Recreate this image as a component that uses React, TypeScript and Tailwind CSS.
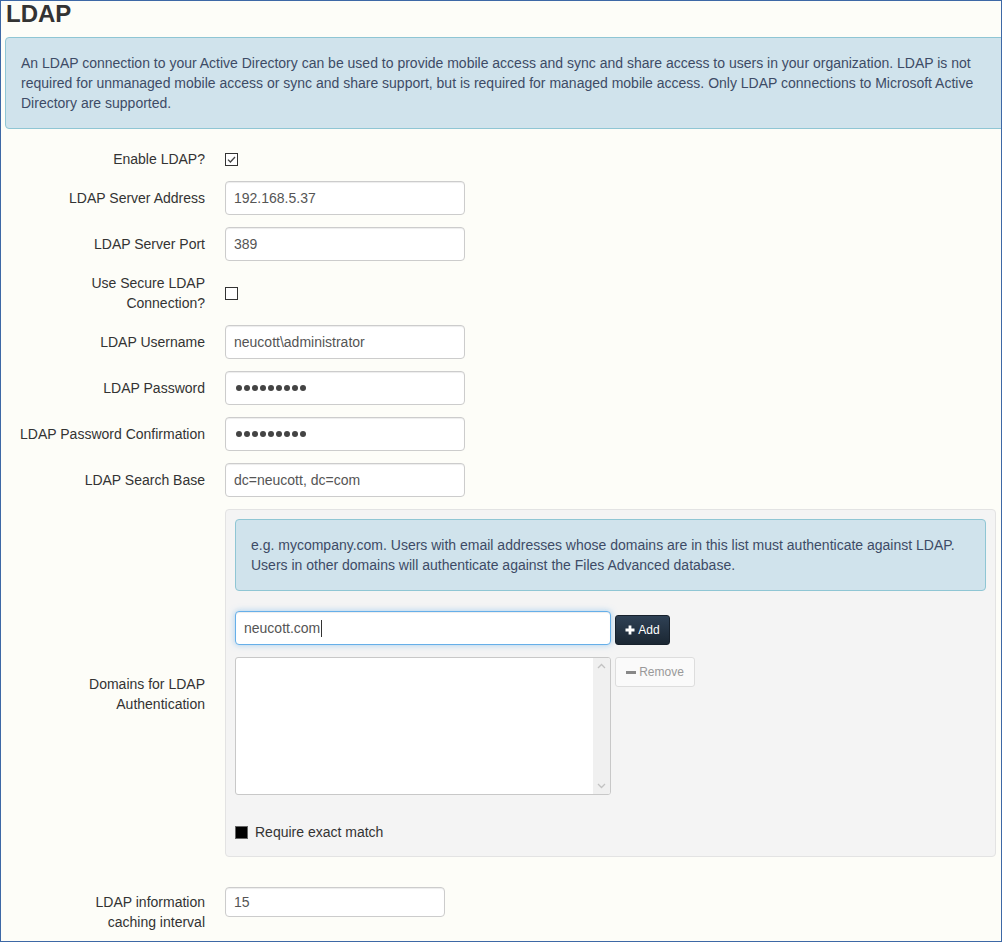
import React from "react";

const fieldSkin =
  "rounded-[4px] border border-[#ccc] bg-white px-[8px] text-[14px] text-[#555] shadow-[inset_0_1px_1px_rgba(0,0,0,0.075)]";

function Label({ children, className = "" }: { children: React.ReactNode; className?: string }) {
  return (
    <div className={`w-[204px] shrink-0 text-right leading-[20px] text-[#333] ${className}`}>{children}</div>
  );
}

function TextField({ value }: { value: string }) {
  return <div className={`${fieldSkin} h-[34px] w-[240px] leading-[32px]`}>{value}</div>;
}

function PasswordField() {
  return (
    <div className={`${fieldSkin} flex h-[34px] w-[240px] items-center gap-[2px] pl-[10px]`} aria-label="password">
      {Array.from({ length: 9 }).map((_, i) => (
        <span key={i} className="block h-[6px] w-[6px] rounded-full bg-[#444]" />
      ))}
    </div>
  );
}

function CheckBox({ checked }: { checked: boolean }) {
  return (
    <span className="flex h-[13px] w-[13px] items-center justify-center border border-[#333] bg-white">
      {checked && (
        <svg width="11" height="11" viewBox="0 0 11 11" fill="none">
          <path d="M2 5.6 L4.4 8 L9 3" stroke="#444" strokeWidth="1.3" />
        </svg>
      )}
    </span>
  );
}

export default function App() {
  return (
    <div className="h-[942px] w-[1002px] overflow-hidden border border-[#3d68a6] bg-[#fdfdf8] font-['Liberation_Sans',Arial,sans-serif] text-[14px] text-[#333]">
      <h1 className="pl-[5px] text-[24px] font-bold leading-[26px] text-[#333]">LDAP</h1>

      <div className="ml-[4px] mr-[-8px] mt-[10px] rounded-[4px] border border-[#8fc6d4] bg-[#d0e3ec] px-[15px] py-[15px] pr-[23px] leading-[20px] text-[#3d4b66]">
        An LDAP connection to your Active Directory can be used to provide mobile access and sync and share
        access to users in your organization. LDAP is not required for unmanaged mobile access or sync and share
        support, but is required for managed mobile access. Only LDAP connections to Microsoft Active Directory
        are supported.
      </div>

      <div className="mt-[20px] flex flex-col gap-[12px]">
        <div className="flex items-center">
          <Label>Enable LDAP?</Label>
          <div className="ml-[20px]">
            <CheckBox checked />
          </div>
        </div>

        <div className="flex items-center">
          <Label>LDAP Server Address</Label>
          <div className="ml-[20px]">
            <TextField value="192.168.5.37" />
          </div>
        </div>

        <div className="flex items-center">
          <Label>LDAP Server Port</Label>
          <div className="ml-[20px]">
            <TextField value="389" />
          </div>
        </div>

        <div className="flex items-center">
          <Label>
            Use Secure LDAP
            <br />
            Connection?
          </Label>
          <div className="ml-[20px]">
            <CheckBox checked={false} />
          </div>
        </div>

        <div className="flex items-center">
          <Label>LDAP Username</Label>
          <div className="ml-[20px]">
            <TextField value="neucott\administrator" />
          </div>
        </div>

        <div className="flex items-center">
          <Label>LDAP Password</Label>
          <div className="ml-[20px]">
            <PasswordField />
          </div>
        </div>

        <div className="flex items-center">
          <Label>LDAP Password Confirmation</Label>
          <div className="ml-[20px]">
            <PasswordField />
          </div>
        </div>

        <div className="flex items-center">
          <Label>LDAP Search Base</Label>
          <div className="ml-[20px]">
            <TextField value="dc=neucott, dc=com" />
          </div>
        </div>

        {/* Domains panel */}
        <div className="flex items-start">
          <Label className="mt-[165px]">
            Domains for LDAP
            <br />
            Authentication
          </Label>
          <div className="ml-[20px] w-[771px] rounded-[4px] border border-[#e3e3e3] bg-[#f4f4f4] px-[9px] pb-[14px] pt-[9px]">
            <div className="rounded-[4px] border border-[#8fc6d4] bg-[#d0e3ec] px-[15px] py-[15px] leading-[20px] text-[#3d4b66]">
              e.g. mycompany.com. Users with email addresses whose domains are in this list must authenticate against
              LDAP. Users in other domains will authenticate against the Files Advanced database.
            </div>

            <div className="mt-[20px] flex items-end gap-[4px]">
              <div className="flex h-[34px] w-[376px] items-center rounded-[4px] border border-[#66afe9] bg-white px-[8px] text-[14px] text-[#555] shadow-[inset_0_1px_1px_rgba(0,0,0,0.075),0_0_6px_rgba(102,175,233,0.55)]">
                <span>neucott.com</span>
                <span className="ml-[1px] h-[17px] w-[1px] bg-[#333]" />
              </div>
              <button className="flex h-[30px] w-[55px] items-center justify-center gap-[3px] rounded-[3px] border border-[#17212c] bg-gradient-to-b from-[#2f4155] to-[#1b2733] text-[12px] text-white">
                <svg width="10" height="10" viewBox="0 0 10 10">
                  <path d="M5 0.5 V9.5 M0.5 5 H9.5" stroke="#fff" strokeWidth="2.8" />
                </svg>
                <span>Add</span>
              </button>
            </div>

            <div className="mt-[12px] flex items-start gap-[4px]">
              <div className="flex h-[138px] w-[376px] overflow-hidden rounded-[3px] border border-[#c8c8c8] bg-white">
                <div className="flex-1" />
                <div className="flex w-[17px] flex-col items-center justify-between bg-[#f0f0f0] py-[5px]">
                  <svg width="9" height="6" viewBox="0 0 9 6" fill="none">
                    <path d="M1 5 L4.5 1.5 L8 5" stroke="#c2c2c2" strokeWidth="1.3" />
                  </svg>
                  <svg width="9" height="6" viewBox="0 0 9 6" fill="none">
                    <path d="M1 1 L4.5 4.5 L8 1" stroke="#c2c2c2" strokeWidth="1.3" />
                  </svg>
                </div>
              </div>
              <button className="flex h-[30px] w-[80px] items-center justify-center gap-[3px] rounded-[3px] border border-[#ddd] bg-[#fafafa] text-[12px] text-[#999]">
                <svg width="10" height="3" viewBox="0 0 10 3">
                  <rect x="0" y="0" width="10" height="3" fill="#888" />
                </svg>
                <span>Remove</span>
              </button>
            </div>

            <div className="mt-[27px] flex h-[20px] items-center gap-[7px]">
              <span className="block h-[13px] w-[13px] border border-[#666] bg-black" />
              <span className="text-[#333]">Require exact match</span>
            </div>
          </div>
        </div>

        <div className="mt-[18px] flex items-start">
          <Label className="mt-[5px]">
            LDAP information
            <br />
            caching interval
          </Label>
          <div className="ml-[20px]">
            <div className={`${fieldSkin} h-[30px] w-[220px] leading-[28px]`}>15</div>
          </div>
        </div>
      </div>
    </div>
  );
}
